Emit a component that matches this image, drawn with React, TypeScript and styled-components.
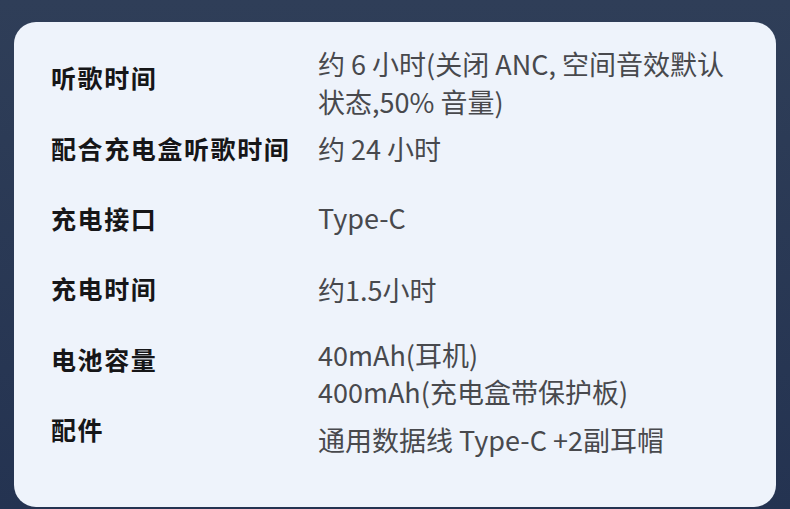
import styled, { createGlobalStyle } from "styled-components";

const GlobalStyle = createGlobalStyle`
  html, body {
    margin: 0;
    padding: 0;
  }
  body {
    font-family: "Noto Sans CJK SC", "Noto Sans", sans-serif;
  }
`;

const Page = styled.div`
  box-sizing: border-box;
  width: 790px;
  height: 509px;
  padding: 22px 14px 2px;
  background: linear-gradient(180deg, #2f3e58 0%, #243351 100%);
`;

const Card = styled.div`
  box-sizing: border-box;
  height: 100%;
  padding: 20px 0 0 37px;
  background: #eef3fb;
  border-radius: 22px;
`;

const Row = styled.div`
  display: grid;
  grid-template-columns: 267px 1fr;
  grid-template-rows: 70.4px;
`;

const Label = styled.div`
  align-self: center;
  font-size: 25px;
  line-height: 38px;
  font-weight: 700;
  letter-spacing: 1.6px;
  color: #161618;
  white-space: nowrap;
`;

const Value = styled.div<{ $offset: number }>`
  align-self: start;
  margin-top: ${(p) => p.$offset}px;
  max-width: 412px;
  font-size: 27px;
  line-height: 38px;
  font-weight: 400;
  color: #48494d;
`;

const Line = styled.div<{ $gap?: number }>`
  margin-top: ${(p) => p.$gap ?? 0}px;
  white-space: nowrap;
`;

type Spec = {
  label: string;
  lines: string[];
  offset: number;
  wrap?: boolean;
};

const specs: Spec[] = [
  {
    label: "听歌时间",
    lines: ["约 6 小时(关闭 ANC, 空间音效默认状态,50% 音量)"],
    offset: 3,
    wrap: true,
  },
  { label: "配合充电盒听歌时间", lines: ["约 24 小时"], offset: 18 },
  { label: "充电接口", lines: ["Type-C"], offset: 16 },
  { label: "充电时间", lines: ["约1.5小时"], offset: 18 },
  {
    label: "电池容量",
    lines: ["40mAh(耳机)", "400mAh(充电盒带保护板)"],
    offset: 12,
  },
  { label: "配件", lines: ["通用数据线 Type-C +2副耳帽"], offset: 27 },
];

function SpecRow({ spec }: { spec: Spec }) {
  return (
    <Row>
      <Label>{spec.label}</Label>
      <Value $offset={spec.offset}>
        {spec.wrap
          ? spec.lines[0]
          : spec.lines.map((l, i) => (
              <Line key={l} $gap={i > 0 ? -1 : 0}>
                {l}
              </Line>
            ))}
      </Value>
    </Row>
  );
}

export default function App() {
  return (
    <>
      <GlobalStyle />
      <Page>
        <Card>
          {specs.map((s) => (
            <SpecRow key={s.label} spec={s} />
          ))}
        </Card>
      </Page>
    </>
  );
}
